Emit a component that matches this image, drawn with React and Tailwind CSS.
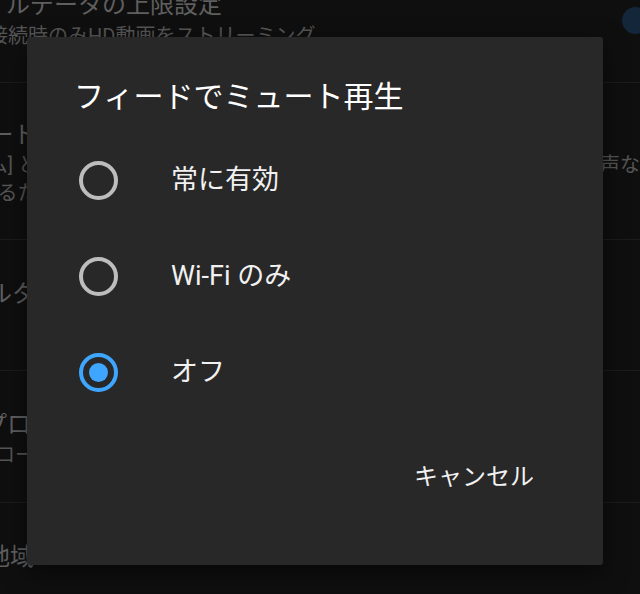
import React, { useState } from 'react';

const font = { fontFamily: 'Roboto, "Noto Sans CJK JP", "Noto Sans", sans-serif' };

const options = [
    { id: 'always', label: '常に有効' },
    { id: 'wifi', label: 'Wi-Fi のみ' },
    { id: 'off', label: 'オフ' },
];

const Radio = ({ checked }) => (
    <span
        className={`flex h-[39px] w-[39px] shrink-0 items-center justify-center rounded-full border-[4px] ${
            checked ? 'border-[#3ea6ff]' : 'border-[#bdbdbd]'
        }`}
    >
        {checked && <span className="h-[19px] w-[19px] rounded-full bg-[#3ea6ff]" />}
    </span>
);

const App = () => {
    const [selected, setSelected] = useState('off');

    return (
        <div className="relative h-[594px] w-[640px] overflow-hidden bg-[#0f0f0f]" style={font}>
            {/* settings list behind the dialog */}
            <div className="flex flex-col">
                <div className="-mt-[49px] flex items-center justify-between border-b border-[#1c1c1c] pt-[38px] pb-[31px]">
                    <div className="min-w-0 overflow-hidden whitespace-nowrap">
                        <div className="-ml-[66px] text-[24px] leading-[32px] text-[#5f5f5f]">モバイルデータの上限設定</div>
                        <div className="-ml-[12px] text-[20px] leading-[30px] text-[#555555]">接続時のみHD動画をストリーミング</div>
                    </div>
                    <span className="-mr-[9px] h-[27px] w-[27px] shrink-0 rounded-full bg-[#13263a]" />
                </div>

                <div className="border-b border-[#1c1c1c] pt-[36px] pb-[32px] whitespace-nowrap">
                    <div className="-ml-[58px] text-[24px] leading-[32px] text-[#5f5f5f]">フィードでミュート再生</div>
                    <div className="flex justify-between text-[20px] leading-[28px] text-[#555555]">
                        <span className="-ml-[57px]">[ホーム] と [登録チャンネル] のフィードで</span>
                        <span>動画を音声な</span>
                    </div>
                    <div className="-ml-[122px] text-[20px] leading-[28px] text-[#555555]">しで再生されるため、内容をすばやく確認できます</div>
                </div>

                <div className="border-b border-[#1c1c1c] pt-[38px] pb-[32px] whitespace-nowrap">
                    <div className="-ml-[60px] text-[24px] leading-[32px] text-[#5f5f5f]">ダブルタップでスキップ</div>
                    <div className="-ml-[60px] text-[20px] leading-[28px] text-[#555555]">10 秒</div>
                </div>

                <div className="border-b border-[#1c1c1c] pt-[38px] pb-[33px] whitespace-nowrap">
                    <div className="-ml-[65px] text-[24px] leading-[32px] text-[#5f5f5f]">アップロード</div>
                    <div className="-ml-[65px] text-[20px] leading-[28px] text-[#555555]">ダウンロードとアップロードの画質</div>
                </div>

                <div className="pt-[38px] whitespace-nowrap">
                    <div className="-ml-[62px] text-[24px] leading-[32px] text-[#5f5f5f]">居住地域</div>
                </div>
            </div>

            {/* dialog */}
            <div className="absolute left-[27px] top-[37px] flex h-[528px] w-[576px] flex-col rounded-[3px] bg-[#282828] shadow-[0_8px_24px_rgba(0,0,0,0.5)]">
                <h2 className="pl-[47px] pt-[40px] text-[30px] leading-[40px] text-white">フィードでミュート再生</h2>

                <div className="mt-[15px] flex flex-col">
                    {options.map((option) => (
                        <button
                            key={option.id}
                            onClick={() => setSelected(option.id)}
                            className="flex h-[96px] items-center gap-[53px] pl-[52px] text-left"
                        >
                            <Radio checked={selected === option.id} />
                            <span className="text-[27px] leading-[34px] text-[#f1f1f1]">{option.label}</span>
                        </button>
                    ))}
                </div>

                <div className="mt-[41px] flex justify-end pr-[69px]">
                    <button className="text-[24px] leading-[32px] text-[#f1f1f1]">キャンセル</button>
                </div>
            </div>
        </div>
    );
};

export default App;
